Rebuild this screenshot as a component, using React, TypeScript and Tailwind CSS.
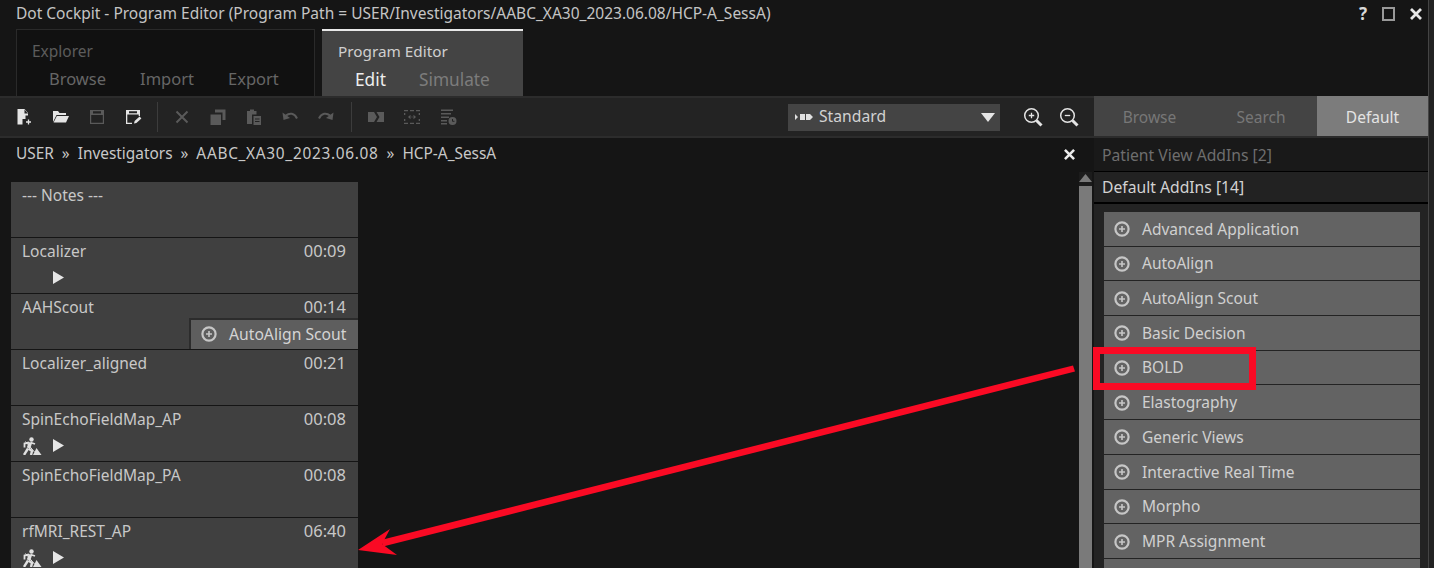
const FONT = "font-['Noto_Sans','Open_Sans',sans-serif]";

const programs = [
  { name: "--- Notes ---", time: "" },
  { name: "Localizer", time: "00:09", play: true },
  { name: "AAHScout", time: "00:14", addin: "AutoAlign Scout" },
  { name: "Localizer_aligned", time: "00:21" },
  { name: "SpinEchoFieldMap_AP", time: "00:08", play: true, dig: true },
  { name: "SpinEchoFieldMap_PA", time: "00:08" },
  { name: "rfMRI_REST_AP", time: "06:40", play: true, dig: true },
];

const addins = [
  "Advanced Application",
  "AutoAlign",
  "AutoAlign Scout",
  "Basic Decision",
  "BOLD",
  "Elastography",
  "Generic Views",
  "Interactive Real Time",
  "Morpho",
  "MPR Assignment",
  "",
];

function PlusCircle({ className }: { className?: string }) {
  return (
    <svg viewBox="0 0 16 16" className={className}>
      <circle cx="8" cy="8" r="6.6" fill="none" stroke="currentColor" strokeWidth="2.2" />
      <path d="M8 5v6M5 8h6" stroke="currentColor" strokeWidth="1.6" />
    </svg>
  );
}

function Play() {
  return (
    <svg viewBox="0 0 11 13" className="w-[11px] h-[13px] text-[#e6e6e6]">
      <path d="M0 0l11 6.5L0 13z" fill="currentColor" />
    </svg>
  );
}

function Digger() {
  return (
    <svg viewBox="0 0 20 18" className="w-[20px] h-[18px] text-[#e0e0e0]" fill="none" stroke="currentColor">
      <circle cx="9.500" cy="2.500" r="2.200" fill="currentColor" stroke="none" />
      <path d="M8.500 5.500L6.500 11" strokeWidth="3.600" />
      <path d="M8.500 5.500l4.500 1.500" strokeWidth="1.800" />
      <path d="M7 5.500L2.500 6.500v4" strokeWidth="1.800" />
      <path d="M6 11.500L2 18" strokeWidth="2.400" />
      <path d="M6.500 11.500l3.500 2.500-1 4" strokeWidth="2.400" />
      <path d="M3.500 4.500L12.500 15" strokeWidth="1" />
      <path d="M11 18l3.500-7 5 7z" fill="currentColor" stroke="none" />
    </svg>
  );
}

function ToolIcon({ children, className }: { children: React.ReactNode; className?: string }) {
  return (
    <svg viewBox="0 0 18 18" className={`w-[18px] h-[18px] shrink-0 ${className}`} fill="currentColor">
      {children}
    </svg>
  );
}

function ZoomIcon({ plus }: { plus?: boolean }) {
  return (
    <svg viewBox="0 0 20 20" className="w-[20px] h-[20px]" fill="none" stroke="currentColor">
      <circle cx="8.500" cy="8.500" r="6.800" strokeWidth="1.500" />
      <path d={plus ? "M5.800 8.500h5.400M8.500 5.800v5.400" : "M5.800 8.500h5.400"} strokeWidth="1.300" />
      <path d="M13.500 13.500l5 5" strokeWidth="3" />
    </svg>
  );
}

function Toolbar() {
  const off = "text-[#5a5a5a]";
  return (
    <div className="flex items-center h-[42px] border-y-2 border-[#2c2c2c] bg-[#232323] pl-[16px]">
      <div className="flex items-center gap-[18px] text-[#e4e4e4]">
        <ToolIcon>
          <path d="M1.5 1h7l3.5 4v2.5H9.5V11h-3v5.500h-5z" />
          <path d="M8.500 1.500v4h3.500z" fill="#232323" />
          <path d="M12.500 11.500v5M10 14h5" stroke="currentColor" strokeWidth="1.3" />
        </ToolIcon>
        <ToolIcon>
          <path d="M1 3h5l1.500 2H14v2H4.500L1 14z" />
          <path d="M4.800 8H17l-3 6.500H1.600z" />
        </ToolIcon>
        <ToolIcon className={off}>
          <path d="M2 2h14v14H2z M3.200 7v7.800h11.600V7z M5 3.200v2.300h8V3.200z" fillRule="evenodd" />
        </ToolIcon>
        <ToolIcon>
          <path d="M2 2h14v6h-1.300V6.500H3.300v8.300H8V16H2z M5 3.200v2h8v-2z" fillRule="evenodd" />
          <path d="M10 15.500l.6-2.500 5-4.500 1.800 1.900-5 4.500z" />
        </ToolIcon>
      </div>
      <div className="w-px h-[30px] bg-[#3c3c3c] ml-[15px] mr-[15px]" />
      <div className={`flex items-center gap-[18px] ${off}`}>
        <ToolIcon>
          <path d="M3.500 3.500l11 11M14.500 3.500l-11 11" stroke="currentColor" strokeWidth="2" />
        </ToolIcon>
        <ToolIcon>
          <path d="M1.500 6.500h10.500v10.500H1.500z" />
          <path d="M6 1.500h10.500V12h-3V4.500H6z" />
        </ToolIcon>
        <ToolIcon>
          <path d="M2 3h3V1.500h4V3h2.500v3.500H7V16H2z" />
          <path d="M8.500 8H16v9H8.500z M10 10.500v1h4.500v-1z M10 13v1h4.500v-1z" fillRule="evenodd" />
        </ToolIcon>
        <ToolIcon>
          <path d="M5 7.500c3.500-3 8.500-2.500 11 3" fill="none" stroke="currentColor" strokeWidth="2" />
          <path d="M1.500 4.500l1 7.500 6.500-2z" />
        </ToolIcon>
        <ToolIcon>
          <path d="M13 7.500c-3.500-3-8.500-2.500-11 3" fill="none" stroke="currentColor" strokeWidth="2" />
          <path d="M16.500 4.500l-1 7.500-6.500-2z" />
        </ToolIcon>
      </div>
      <div className="w-px h-[30px] bg-[#3c3c3c] ml-[16px] mr-[15px]" />
      <div className={`flex items-center gap-[18px] ${off}`}>
        <ToolIcon>
          <path d="M1 4h6l3 5-3 5H1z" />
          <path d="M9.500 4H17v10H9.500l3-5z" />
        </ToolIcon>
        <ToolIcon>
          <path d="M1 2h4v1.300H1z M7 2h4v1.300H7z M13 2h4v1.300h-4z M1 14.700h4V16H1z M7 14.700h4V16H7z M13 14.700h4V16h-4z M1 5h1.300v2H1z M15.700 5H17v2h-1.300z M1 11h1.300v2H1z M15.700 11H17v2h-1.300z" />
          <path d="M5 9l2.500-2.200v4.400z M13 9l-2.500-2.200v4.400z M8.500 8.500h1v1h-1z" />
        </ToolIcon>
        <ToolIcon>
          <path d="M2 1.500h12v1.500H2z M2 5h10v1.500H2z M2 8.500h8V10H2z M2 12h6v1.500H2z M2 15h6v1.500H2z" />
          <circle cx="13.500" cy="13" r="4" />
          <path d="M13.500 11v2.300h2" stroke="#232323" strokeWidth="1" fill="none" />
        </ToolIcon>
      </div>
      <div className="ml-auto flex items-center">
        <div className="flex items-center w-[212px] h-[27px] bg-[#444444] pl-[7px] pr-[5px] text-[15.700px] text-[#d2d2d2]">
          <svg viewBox="0 0 18 8" className="w-[18px] h-[8px] mr-[6px] text-[#e0e0e0]" fill="currentColor">
            <path d="M0 1l3 3-3 3z M5 1h5v6H5z M11 1h4l3 3-3 3h-4z" />
          </svg>
          Standard
          <svg viewBox="0 0 14 9" className="ml-auto w-[14px] h-[9px] text-[#e6e6e6]" fill="currentColor">
            <path d="M0 0h14L7 9z" />
          </svg>
        </div>
        <div className="flex items-center gap-[16px] ml-[23px] mr-[15px] text-[#e4e4e4]">
          <ZoomIcon plus />
          <ZoomIcon />
        </div>
      </div>
    </div>
  );
}

function ProgramRow({ item }: { item: (typeof programs)[number] }) {
  return (
    <div className="relative h-[54.500px] shrink-0 bg-[#404040] pl-[11px] pr-[12px] pt-[2px] text-[15.500px] leading-[22px] text-[#c8c8c8]">
      <div className="flex justify-between">
        <span>{item.name}</span>
        <span className="text-[16.500px]">{item.time}</span>
      </div>
      {item.play && (
        <div className="flex items-center h-[21px] mt-[5px]">
          <div className="w-[31px]">{item.dig && <Digger />}</div>
          <Play />
        </div>
      )}
      {item.addin && (
        <div className="absolute right-0 bottom-0 flex items-center w-[169px] h-[31px] border-t-2 border-l-2 border-[#2c2c2c] bg-[#5e5e5e] pl-[10px] text-[15.700px] text-[#d4d4d4]">
          <PlusCircle className="w-[16px] h-[16px] text-[#c6c6c6] mr-[12px]" />
          {item.addin}
        </div>
      )}
    </div>
  );
}

export default function App() {
  return (
    <div className={`relative flex w-[1434px] h-[568px] overflow-hidden bg-[#222222] ${FONT}`}>
      <div className="w-[1429px] shrink-0 bg-[#151515] border-r border-[#444444]">
        {/* title bar */}
        <div className="flex items-center h-[27px] pl-[16px] mb-[2px] text-[15.500px] text-[#c4c4c4]">
          <span>
            Dot Cockpit - Program Editor (Program Path = USER/Investigators/AABC_XA30_2023.06.08/HCP-A_SessA)
          </span>
          <div className="ml-auto flex items-center gap-[15px] text-[#e8e8e8] -mr-px">
            <span className="text-[17px] font-bold text-[#d8d8d8]">?</span>
            <div className="w-[13px] h-[14px] border-2 border-[#999999]" />
            <svg viewBox="0 0 12 12" className="w-[12px] h-[12px] mr-[7px]" stroke="currentColor" strokeWidth="2.800">
              <path d="M1 1l10 10M11 1L1 11" />
            </svg>
          </div>
        </div>

        {/* ribbon tabs */}
        <div className="flex h-[67px] pl-[16px] gap-[7px]">
          <div className="w-[299px] border border-b-0 border-[#2a2a2a] bg-[#111111] pl-[15px] pt-[11px] text-[#5c5c5c]">
            <div className="text-[15.500px] leading-[20px]">Explorer</div>
            <div className="flex gap-[34px] pl-[17px] mt-[7px] text-[16.500px] leading-[22px] text-[#666666]">
              <span>Browse</span>
              <span>Import</span>
              <span>Export</span>
            </div>
          </div>
          <div className="w-[201px] border-t-2 border-[#e8e8e8] bg-[#444444] pl-[16px] pt-[10px]">
            <div className="text-[15.300px] leading-[20px] text-[#cfcfcf]">Program Editor</div>
            <div className="flex gap-[33px] pl-[17px] mt-[8px] text-[17.300px] leading-[22px]">
              <span className="text-[#eeeeee]">Edit</span>
              <span className="text-[#7c7c7c]">Simulate</span>
            </div>
          </div>
        </div>

        <div className="flex h-[472px]">
          {/* program editor */}
          <div className="w-[1094px] shrink-0 flex flex-col">
            <Toolbar />
            <div className="flex items-center justify-between h-[34px] pb-[2px] pl-[16px] pr-[19px] text-[15.400px] text-[#c8c8c8]">
              <div className="flex gap-[8px]">
                <span>USER</span>
                <span>»</span>
                <span>Investigators</span>
                <span>»</span>
                <span className="tracking-[0.7px]">AABC_XA30_2023.06.08</span>
                <span>»</span>
                <span>HCP-A_SessA</span>
              </div>
              <svg viewBox="0 0 12 12" className="w-[11px] h-[11px] text-[#ececec]" stroke="currentColor" strokeWidth="2.800">
                <path d="M1 1l10 10M11 1L1 11" />
              </svg>
            </div>
            <div className="flex flex-1 min-h-0">
              <div className="pl-[11px] pt-[10px] w-[1079px] overflow-hidden">
                <div className="flex flex-col gap-[1.500px] w-[347px]">
                  {programs.map((item) => (
                    <ProgramRow key={item.name} item={item} />
                  ))}
                </div>
              </div>
              <div className="w-[13px] flex flex-col items-center pt-[2px] bg-[#1c1c1c]">
                <svg viewBox="0 0 13 8" className="w-[13px] h-[8px] text-[#7a7a7a] shrink-0" fill="currentColor">
                  <path d="M6.500 0l6.500 8H0z" />
                </svg>
                <div className="w-full flex-1 mt-[4px] bg-[#7a7a7a]" />
              </div>
            </div>
          </div>

          {/* add-ins side panel */}
          <div className="flex-1 flex flex-col">
            <div className="flex h-[42px] border-b-2 border-[#2c2c2c] bg-[#444444] pt-[3px] text-[15.500px] text-[#777777]">
              <div className="w-[111px] flex items-center justify-center">Browse</div>
              <div className="w-[112px] flex items-center justify-center">Search</div>
              <div className="flex-1 -mt-[3px] flex items-center justify-center pt-[3px] bg-[#7c7c7c] text-[#e4e4e4]">Default</div>
            </div>
            <div className="flex items-center h-[34px] px-[8px] pt-[3px] bg-[#191919] border-b border-black text-[15.700px] text-[#6e6e6e]">
              Patient View AddIns [2]
            </div>
            <div className="flex items-center h-[32px] px-[8px] pt-[2px] bg-[#222222] border-b-2 border-black text-[15.700px] text-[#d2d2d2]">
              Default AddIns [14]
            </div>
            <div className="flex-1 pl-[10px] pt-[8px] pr-[8px] bg-[#232323] overflow-hidden">
              <div className="flex flex-col gap-[1px]">
                {addins.map((name, i) => (
                  <div
                    key={i}
                    className="flex items-center shrink-0 h-[33.700px] pl-[10px] pt-[1px] bg-[#636363] text-[15.500px] text-[#d0d0d0]"
                  >
                    <PlusCircle className="w-[16px] h-[16px] text-[#c6c6c6] mr-[12px]" />
                    {name}
                  </div>
                ))}
              </div>
            </div>
          </div>
        </div>
      </div>

      {/* annotation over the screenshot */}
      <div className="absolute left-[1093px] top-[347px] w-[163px] h-[43px] border-[7px] border-[#fa0a24]" />
      <svg className="absolute left-0 top-0 w-[1434px] h-[568px] pointer-events-none" viewBox="0 0 1434 568">
        <path d="M1073 365.500L1075 371.500L383 546.500L381 540z" fill="#fa0a24" />
        <path d="M358 550L390 529L382 544L397 555z" fill="#fa0a24" />
      </svg>
    </div>
  );
}
